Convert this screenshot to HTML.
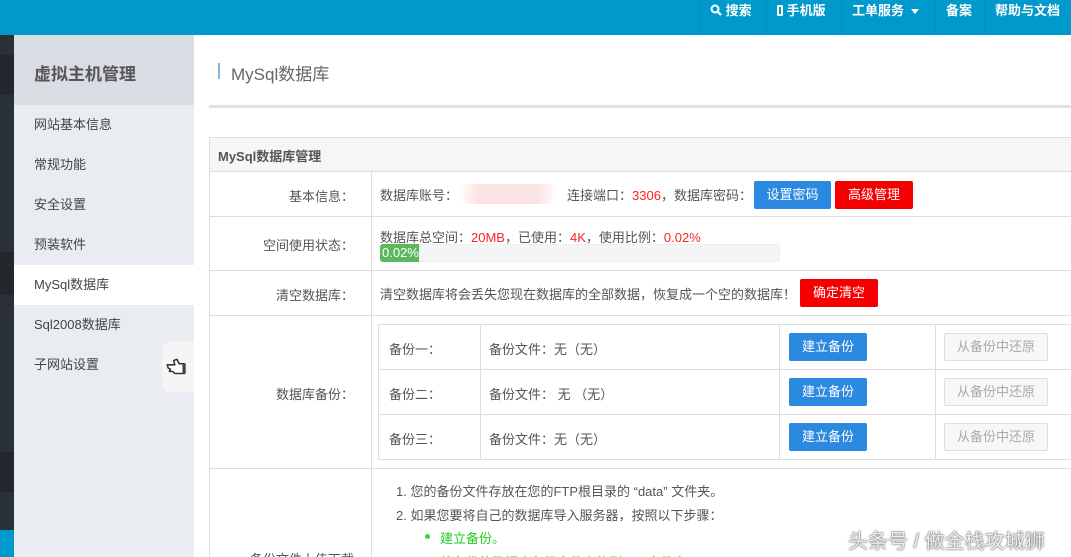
<!DOCTYPE html>
<html><head><meta charset="utf-8"><style>
*{margin:0;padding:0;box-sizing:border-box}
html{width:1071px;height:557px;overflow:hidden}
body{width:1071px;height:557px;overflow:hidden;position:relative;background:#fff;font-family:"Liberation Sans","Noto Sans CJK SC",sans-serif;font-size:13px;color:#555}
.a{position:absolute}
.top{left:0;top:0;width:1071px;height:35px;background:#0099cc}
.nav{top:0;height:35px;line-height:21px;color:#fff;font-size:13px;font-weight:bold;border-left:1px solid #0a8bba;padding-left:10px}
.strip{left:0;width:14px;background:#2a3038}
.side{left:14px;top:35px;width:180px;height:522px;background:#e9ecf0}
.sh{left:14px;top:35px;width:180px;height:70px;background:#d9dce2;font-size:17px;font-weight:bold;color:#555;padding:25px 0 0 20px}
.si{left:14px;width:180px;height:40px;line-height:40px;padding-left:20px;color:#444;font-size:13px}
.ln{background:#ddd}
.lbl{left:209px;width:162px;text-align:right;padding-right:17px;color:#555}
.btn{height:28px;line-height:28px;color:#fff;text-align:center;border-radius:2px;font-size:13px}
.blue{background:#2b89e0}
.red{background:#f50000}
.gray{background:#f7f7f7;border:1px solid #ddd;color:#aaa;line-height:26px}
.r{color:#f22}
</style></head><body>
<div class="a top"></div>
<div class="a nav" style="left:699px;width:67px"><svg width="12" height="12" viewBox="0 0 12 12" style="vertical-align:-1px"><circle cx="5" cy="5" r="3.5" stroke="#fff" stroke-width="2" fill="none"/><path d="M7.5 7.5L11 11" stroke="#fff" stroke-width="2.2"/></svg> 搜索</div>
<div class="a nav" style="left:766px;width:75px"><span style="display:inline-block;width:6px;height:11px;border:2px solid #fff;border-radius:1px;vertical-align:-1px"></span> 手机版</div>
<div class="a nav" style="left:841px;width:94px">工单服务 <span style="display:inline-block;border:4px solid transparent;border-top:5px solid #fff;vertical-align:-3px;margin-left:3px"></span></div>
<div class="a nav" style="left:935px;width:49px">备案</div>
<div class="a nav" style="left:984px;width:87px">帮助与文档</div>

<div class="a strip" style="top:35px;height:495px"></div>
<div class="a strip" style="top:55px;height:40px;background:#22262d"></div>
<div class="a strip" style="top:252px;height:43px;background:#22262d"></div>
<div class="a strip" style="top:452px;height:40px;background:#22262d"></div>
<div class="a strip" style="top:530px;height:27px;background:#0099cc"></div>

<div class="a side"></div>
<div class="a sh">虚拟主机管理</div>
<div class="a si" style="top:105px">网站基本信息</div>
<div class="a si" style="top:145px">常规功能</div>
<div class="a si" style="top:185px">安全设置</div>
<div class="a si" style="top:225px">预装软件</div>
<div class="a si" style="top:265px;background:#fff">MySql数据库</div>
<div class="a si" style="top:305px">Sql2008数据库</div>
<div class="a si" style="top:345px">子网站设置</div>
<div class="a" style="left:162px;top:342px;width:32px;height:50px;background:#f5f5f5;border-radius:8px 0 0 8px"></div>
<svg class="a" style="left:165px;top:357px" width="24" height="20" viewBox="0 0 22 18"><path d="M2 7 L9 7 L8 3 L11 2 L13 6 L18 6 L18 15 L9 15 L7 13 L4 13 L5 11 L3 10 Z" fill="#fff" stroke="#333" stroke-width="1.4" stroke-linejoin="round"/><rect x="16" y="6" width="3" height="9" fill="#444"/></svg>

<div class="a" style="left:218px;top:63px;width:2px;height:16px;background:#8ab4dc"></div>
<div class="a" style="left:231px;top:60px;font-size:17px;color:#666">MySql数据库</div>
<div class="a ln" style="left:209px;top:105px;width:862px;height:3px;background:#e0e0e0"></div>

<div class="a" style="left:209px;top:137px;width:862px;height:35px;background:#f6f6f6;border:1px solid #ddd;border-right:none"></div>
<div class="a" style="left:218px;top:146px;font-weight:bold;font-size:13px;color:#555">MySql数据库管理</div>
<div class="a ln" style="left:209px;top:137px;width:1px;height:420px"></div>
<div class="a ln" style="left:371px;top:172px;width:1px;height:385px"></div>
<div class="a ln" style="left:209px;top:216px;width:862px;height:1px"></div>
<div class="a ln" style="left:209px;top:270px;width:862px;height:1px"></div>
<div class="a ln" style="left:209px;top:315px;width:862px;height:1px"></div>
<div class="a ln" style="left:209px;top:468px;width:862px;height:1px"></div>

<div class="a lbl" style="top:186px">基本信息：</div>
<div class="a lbl" style="top:235px">空间使用状态：</div>
<div class="a lbl" style="top:285px">清空数据库：</div>
<div class="a lbl" style="top:384px">数据库备份：</div>
<div class="a lbl" style="top:549px">备份文件上传下载</div>

<div class="a" style="left:380px;top:185px">数据库账号：</div>
<div class="a" style="left:458px;top:184px;width:100px;height:20px;background:linear-gradient(90deg,#fff,#fde4e4 20%,#fde4e4 80%,#fff);border-radius:8px"></div>
<div class="a" style="left:567px;top:185px">连接端口：<span class="r">3306</span>，数据库密码：</div>
<div class="a btn blue" style="left:754px;top:181px;width:77px">设置密码</div>
<div class="a btn red" style="left:835px;top:181px;width:78px">高级管理</div>

<div class="a" style="left:380px;top:227px">数据库总空间：<span class="r">20MB</span>，已使用：<span class="r">4K</span>，使用比例：<span class="r">0.02%</span></div>
<div class="a" style="left:380px;top:244px;width:400px;height:18px;background:#f5f5f5;border-radius:3px;border:1px solid #eee"></div>
<div class="a" style="left:380px;top:244px;width:39px;height:18px;background:#5cb85c;border-radius:3px 0 0 3px;color:#fff;line-height:18px;padding-left:2px">0.02%</div>

<div class="a" style="left:380px;top:284px">清空数据库将会丢失您现在数据库的全部数据，恢复成一个空的数据库！</div>
<div class="a btn red" style="left:800px;top:279px;width:78px">确定清空</div>

<div class="a" style="left:378px;top:324px;width:700px;height:136px;border:1px solid #ddd"></div>
<div class="a ln" style="left:378px;top:369px;width:693px;height:1px"></div>
<div class="a ln" style="left:378px;top:414px;width:693px;height:1px"></div>
<div class="a ln" style="left:480px;top:324px;width:1px;height:136px"></div>
<div class="a ln" style="left:779px;top:324px;width:1px;height:136px"></div>
<div class="a ln" style="left:935px;top:324px;width:1px;height:136px"></div>

<div class="a" style="left:389px;top:339px">备份一：</div>
<div class="a" style="left:489px;top:339px">备份文件：无（无）</div>
<div class="a btn blue" style="left:789px;top:333px;width:78px">建立备份</div>
<div class="a btn gray" style="left:944px;top:333px;width:104px">从备份中还原</div>
<div class="a" style="left:389px;top:384px">备份二：</div>
<div class="a" style="left:489px;top:384px">备份文件： 无 （无）</div>
<div class="a btn blue" style="left:789px;top:378px;width:78px">建立备份</div>
<div class="a btn gray" style="left:944px;top:378px;width:104px">从备份中还原</div>
<div class="a" style="left:389px;top:429px">备份三：</div>
<div class="a" style="left:489px;top:429px">备份文件：无（无）</div>
<div class="a btn blue" style="left:789px;top:423px;width:78px">建立备份</div>
<div class="a btn gray" style="left:944px;top:423px;width:104px">从备份中还原</div>

<div class="a" style="left:396px;top:481px">1. 您的备份文件存放在您的FTP根目录的 “data” 文件夹。</div>
<div class="a" style="left:396px;top:505px">2. 如果您要将自己的数据库导入服务器，按照以下步骤：</div>
<div class="a" style="left:425px;top:534px;width:5px;height:5px;border-radius:50%;background:#3d3"></div>
<div class="a" style="left:440px;top:528px;color:#2c2">建立备份。</div>
<div class="a" style="left:440px;top:552px;color:#2c2">将备份的数据库备份文件上传到data文件夹</div>
<div class="a" style="left:848px;top:525px;font-size:20px;color:#eee;text-shadow:0 0 2px #666,0 0 1px #555">头条号 / 做全栈攻城狮</div>
</body></html>
